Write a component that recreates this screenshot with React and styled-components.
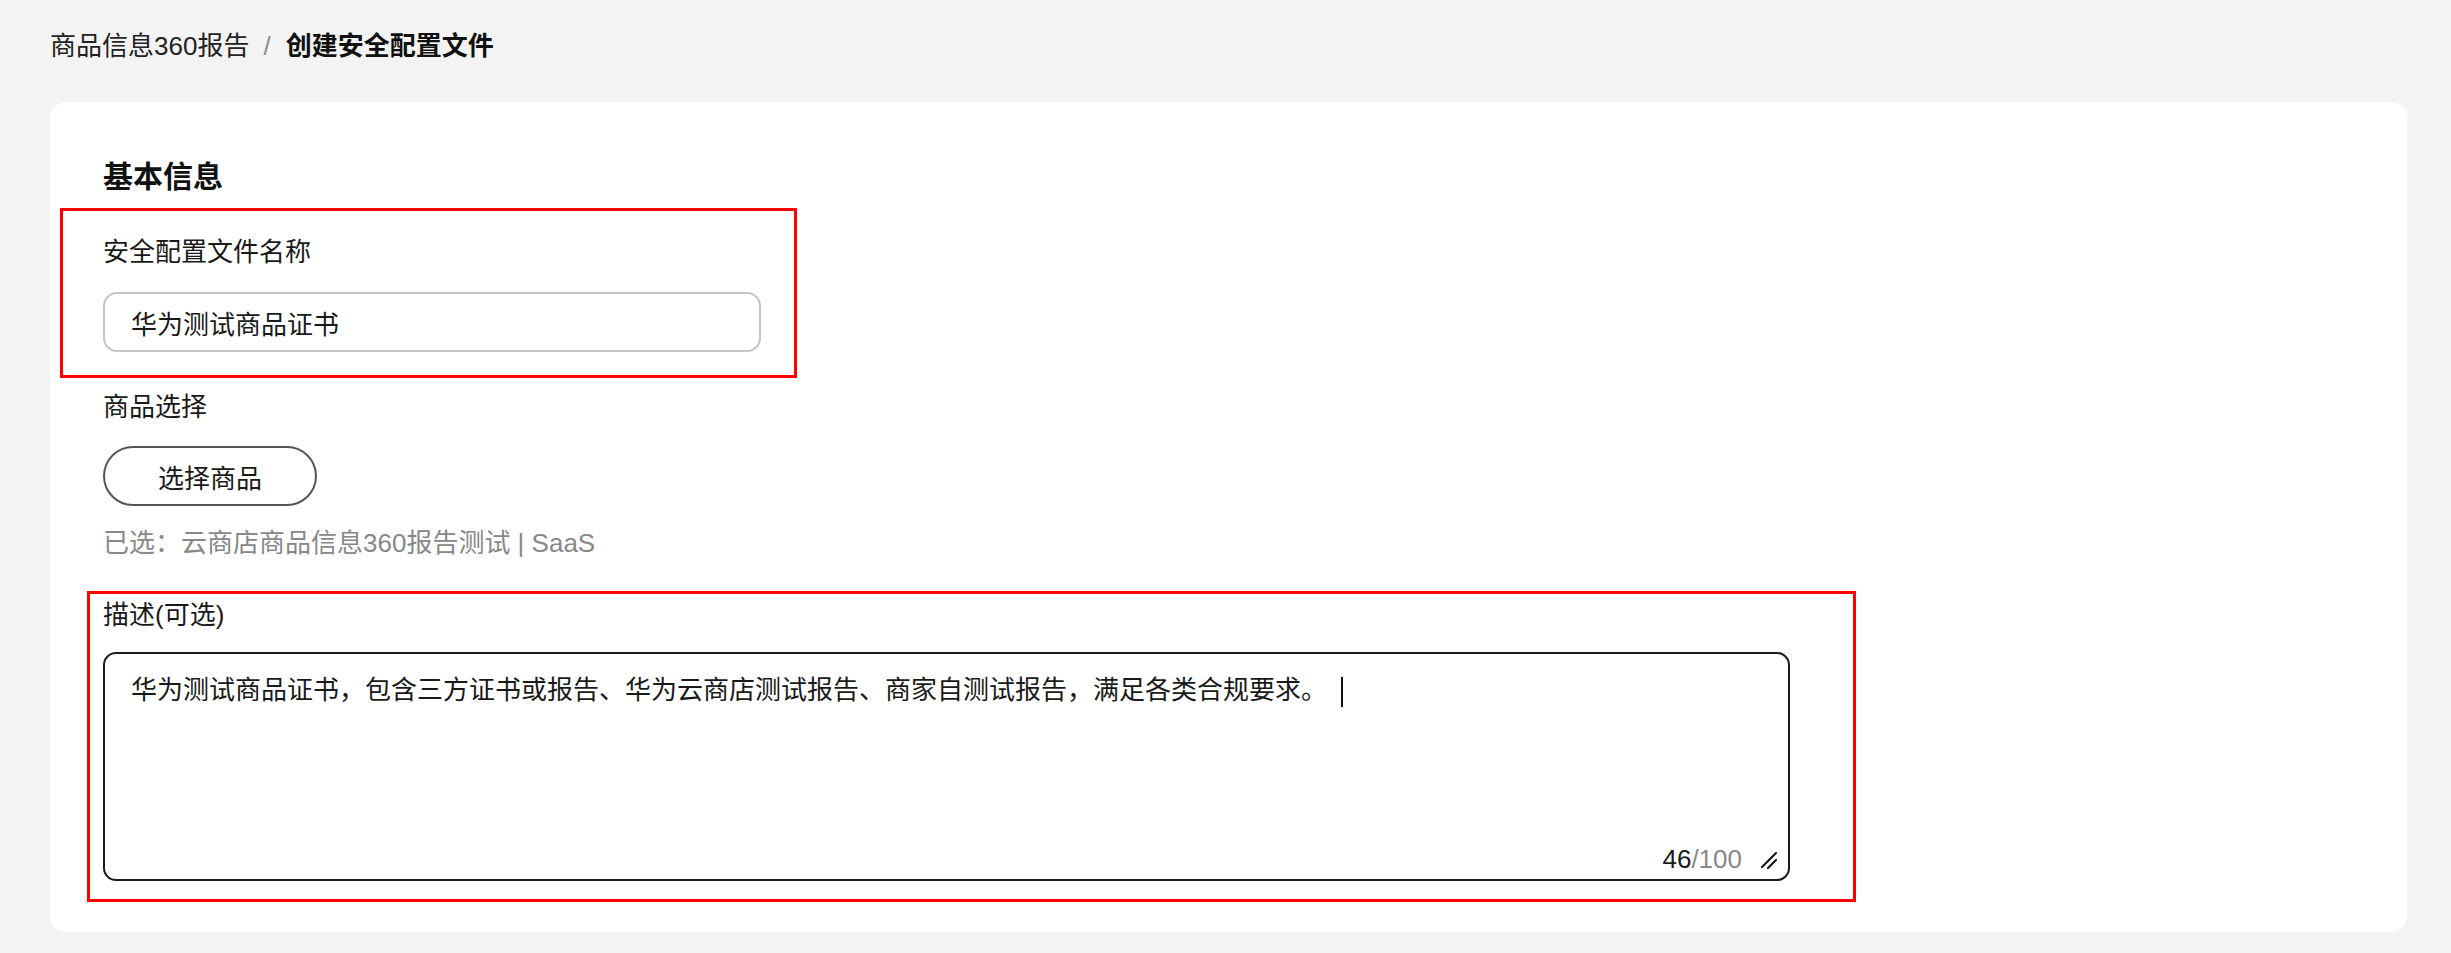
import styled, { createGlobalStyle } from "styled-components";

const GlobalStyle = createGlobalStyle`
  html, body {
    margin: 0;
    padding: 0;
    background: #f3f3f3;
  }
  body {
    font-family: "Liberation Sans", "Noto Sans CJK SC", sans-serif;
    color: #191919;
  }
`;

const description =
  "华为测试商品证书，包含三方证书或报告、华为云商店测试报告、商家自测试报告，满足各类合规要求。";

const App = () => {
  return (
    <Page>
      <GlobalStyle />
      <Breadcrumb>
        <Crumb>商品信息360报告</Crumb>
        <Separator>/</Separator>
        <Crumb current>创建安全配置文件</Crumb>
      </Breadcrumb>

      <Card>
        <SectionTitle>基本信息</SectionTitle>

        <Highlight $offset={43} $width={737} $pad="22px 33px 23px 40px" $top={9}>
          <Label>安全配置文件名称</Label>
          <NameInput defaultValue="华为测试商品证书" />
        </Highlight>

        <Field>
          <Label>商品选择</Label>
          <PillButton type="button">选择商品</PillButton>
          <Hint>已选：云商店商品信息360报告测试 | SaaS</Hint>
        </Field>

        <Highlight $offset={16} $width={1769} $pad="2px 63px 18px 13px" $top={28}>
          <Label>描述(可选)</Label>
          <TextBox>
            <TextLine>
              {description}
              <Caret />
            </TextLine>
            <TextFooter>
              <Counter>
                46<CounterMax>/100</CounterMax>
              </Counter>
              <svg width="16" height="18" viewBox="0 0 16 18">
                <line x1="1" y1="16" x2="15" y2="2" stroke="#111" strokeWidth="2.2" strokeLinecap="round" />
                <line x1="7" y1="17" x2="15" y2="9" stroke="#111" strokeWidth="2.2" strokeLinecap="round" />
              </svg>
            </TextFooter>
          </TextBox>
        </Highlight>
      </Card>
    </Page>
  );
};

const Page = styled.div`
  padding: 27px 44px 21px 50px;
  min-height: 953px;
  box-sizing: border-box;
`;

const Breadcrumb = styled.div`
  display: flex;
  align-items: center;
  font-size: 26px;
  line-height: 39px;
  height: 39px;
`;

const Crumb = styled.span`
  color: ${({ current }) => (current ? "#111" : "#222")};
  font-weight: ${({ current }) => (current ? 700 : 400)};
`;

const Separator = styled.span`
  color: #8c8c8c;
  margin: 0 15px 0 14px;
`;

const Card = styled.div`
  margin-top: 36px;
  background: #fff;
  border-radius: 16px;
  padding: 52px 0 30px 53px;
  display: flex;
  flex-direction: column;
  align-items: flex-start;
`;

const SectionTitle = styled.h2`
  margin: 0;
  font-size: 30px;
  line-height: 45px;
  font-weight: 700;
  color: #111;
`;

const Highlight = styled.div`
  box-sizing: border-box;
  margin-top: ${({ $top }) => $top}px;
  margin-left: -${({ $offset }) => $offset}px;
  width: ${({ $width }) => $width}px;
  border: 3px solid #ff0000;
  padding: ${({ $pad }) => $pad};
  display: flex;
  flex-direction: column;
  align-items: flex-start;
`;

const Field = styled.div`
  margin-top: 10px;
  display: flex;
  flex-direction: column;
  align-items: flex-start;
`;

const Label = styled.div`
  font-size: 26px;
  line-height: 39px;
  color: #191919;
`;

const NameInput = styled.input`
  box-sizing: border-box;
  margin-top: 20px;
  width: 658px;
  height: 60px;
  border: 2px solid #c4c4c4;
  border-radius: 14px;
  padding: 0 24px 0 26px;
  font-family: inherit;
  font-size: 26px;
  color: #191919;
  background: #fff;
  outline: none;
`;

const PillButton = styled.button`
  box-sizing: border-box;
  margin-top: 19px;
  width: 214px;
  height: 60px;
  border: 2px solid #555;
  border-radius: 30px;
  background: #fff;
  font-family: inherit;
  font-size: 26px;
  color: #191919;
  cursor: pointer;
  padding: 0;
`;

const Hint = styled.div`
  margin-top: 18px;
  font-size: 26px;
  line-height: 39px;
  color: #888;
`;

const TextBox = styled.div`
  box-sizing: border-box;
  margin-top: 17px;
  width: 100%;
  height: 229px;
  border: 2px solid #1c1c1c;
  border-radius: 13px;
  padding: 17px 11px 0 26px;
  display: flex;
  flex-direction: column;
`;

const TextLine = styled.div`
  font-size: 26px;
  line-height: 39px;
  color: #191919;
`;

const Caret = styled.span`
  display: inline-block;
  width: 2px;
  height: 30px;
  background: #111;
  margin-left: 14px;
  vertical-align: middle;
`;

const TextFooter = styled.div`
  margin-top: auto;
  display: flex;
  align-items: center;
  justify-content: flex-end;
  gap: 19px;
  height: 39px;
`;

const Counter = styled.span`
  font-size: 26px;
  line-height: 39px;
  color: #191919;
`;

const CounterMax = styled.span`
  color: #888;
`;

export default App;
